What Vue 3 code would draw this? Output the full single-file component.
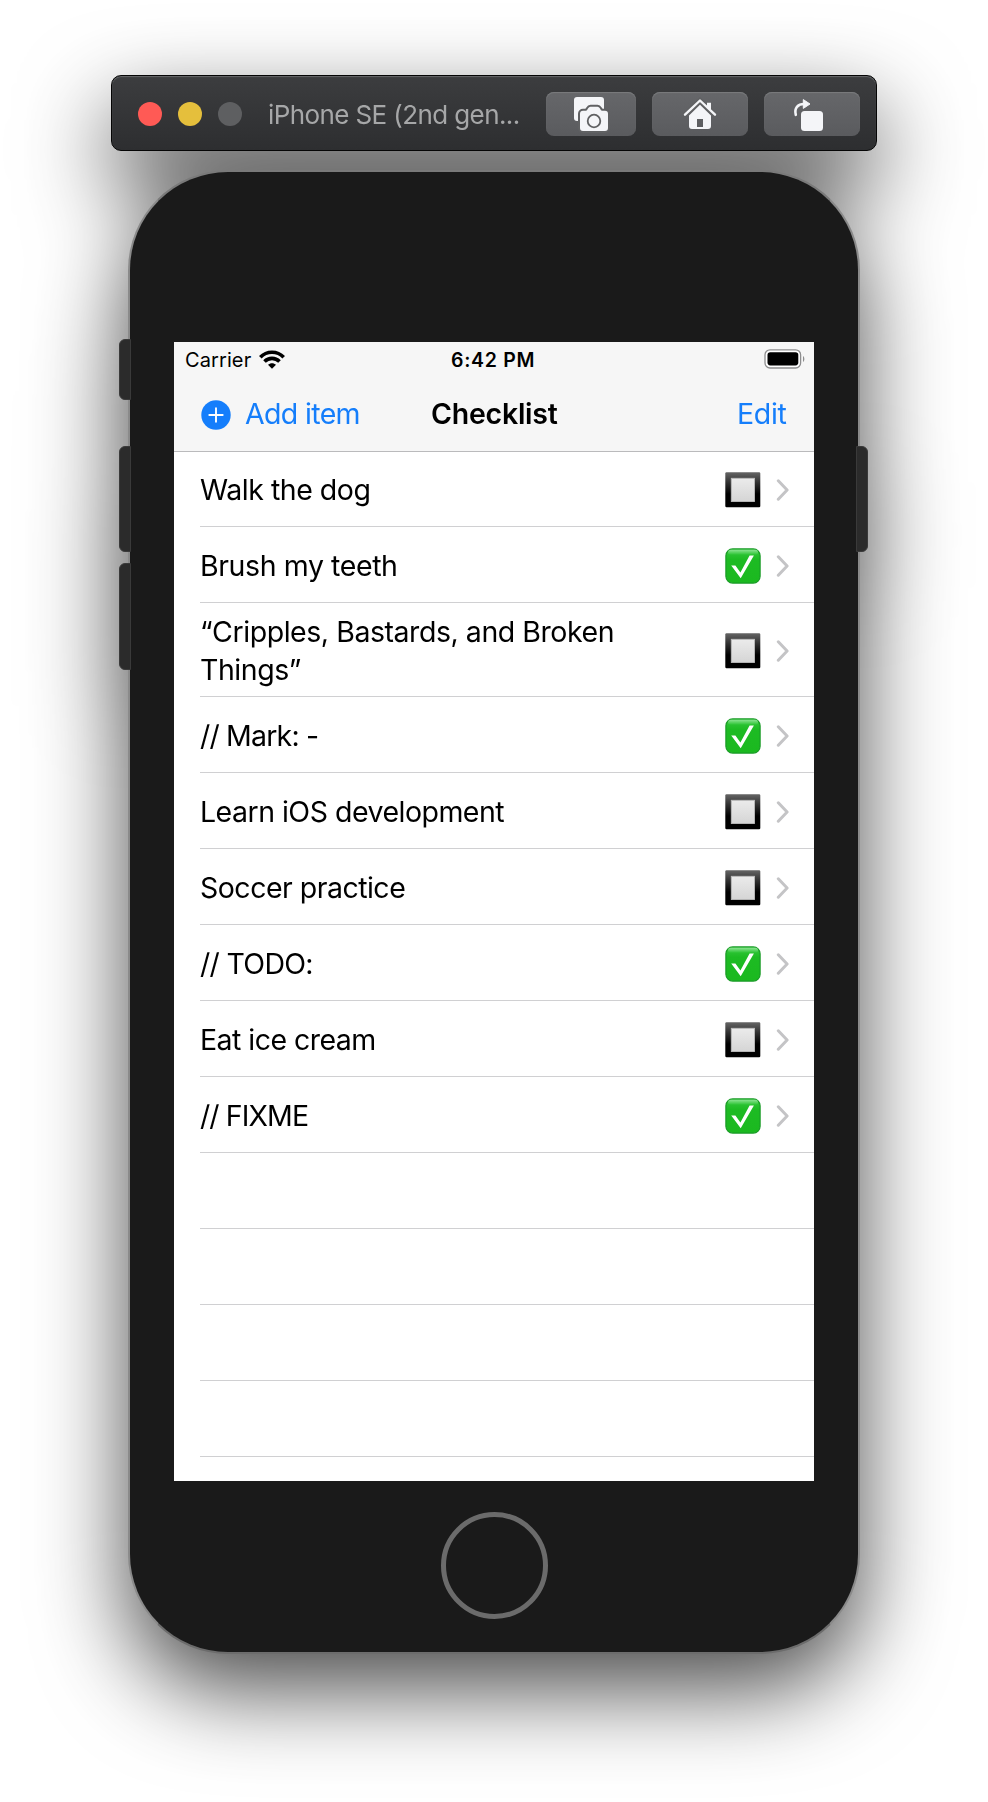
<script setup>
const items = [
  { text: 'Walk the dog', done: false, spacing: -0.46 },
  { text: 'Brush my teeth', done: true, spacing: -0.4 },
  { text: '“Cripples, Bastards, and Broken Things”', done: false, spacing: -0.45, tall: true },
  { text: '// Mark: -', done: true, spacing: -0.82 },
  { text: 'Learn iOS development', done: false, spacing: -0.51 },
  { text: 'Soccer practice', done: false, spacing: -0.51 },
  { text: '// TODO:', done: true, spacing: -0.7 },
  { text: 'Eat ice cream', done: false, spacing: -0.54 },
  { text: '// FIXME', done: true, spacing: -0.9 }
]
</script>

<template>
  <main class="desktop">
    <div class="simulator">
      <header class="toolbar">
        <span class="light red"></span>
        <span class="light yellow"></span>
        <span class="light gray"></span>
        <span class="device-name">iPhone SE (2nd gen...</span>
        <button class="tool shot">
          <svg width="90" height="44" viewBox="0 0 90 44">
            <rect x="28" y="5" width="30" height="24" rx="3" fill="#f4f5f8" />
            <path d="M37 18.700h3c1.500 0 2-4 4.500-4h7c2.500 0 3 4 4.500 4h3a3 3 0 0 1 3 3V36a3 3 0 0 1-3 3H37a3 3 0 0 1-3-3V21.700a3 3 0 0 1 3-3z" stroke="#606163" stroke-width="4" fill="#606163" />
            <path d="M37 18.700h3c1.500 0 2-4 4.500-4h7c2.500 0 3 4 4.500 4h3a3 3 0 0 1 3 3V36a3 3 0 0 1-3 3H37a3 3 0 0 1-3-3V21.700a3 3 0 0 1 3-3z" fill="#f4f5f8" />
            <circle cx="48" cy="29" r="6.300" fill="none" stroke="#606163" stroke-width="1.800" />
          </svg>
        </button>
        <button class="tool">
          <svg width="96" height="44" viewBox="0 0 96 44" fill="#f4f5f8">
            <path d="M48 12.700 59 23.500V34a3 3 0 0 1-3 3H51V27h-6v10h-5a3 3 0 0 1-3-3V23.500z" />
            <path d="M45 35h6v2h-6z" />
            <path d="M33 22.700 48 8.500l15 14.200" fill="none" stroke="#606163" stroke-width="5" />
            <path d="M33 22.700 48 8.500l15 14.200" fill="none" stroke="#f4f5f8" stroke-width="2.400" stroke-linecap="round" stroke-linejoin="round" />
            <path d="M55 10.700h4v8l-4-4z" />
          </svg>
        </button>
        <button class="tool">
          <svg width="96" height="44" viewBox="0 0 96 44" fill="#f4f5f8">
            <rect x="37" y="19" width="22" height="20" rx="3.500" />
            <path d="M31.800 22.800C30 16 34 12 40 12" fill="none" stroke="#f4f5f8" stroke-width="2.600" stroke-linecap="round" />
            <path d="M39.300 7.600v8.800l6.700-4.400z" stroke="#f4f5f8" stroke-linejoin="round" />
          </svg>
        </button>
      </header>

      <section class="phone">
        <i class="side mute"></i>
        <i class="side up"></i>
        <i class="side down"></i>
        <i class="side power"></i>
        <div class="body">
          <div class="screen">
            <div class="status">
              <span class="carrier">Carrier</span>
              <svg class="wifi" width="26" height="19" viewBox="0 0 26 19">
                <g fill="none" stroke="#000" stroke-width="3.600">
                  <path d="M1.300 7.300C7.600 .6 18.400 .6 24.700 7.300" />
                  <path d="M5.500 11.500c4.200-4.200 10.800-4.200 15 0" />
                </g>
                <path d="M9 14.800c2.200-2.100 5.800-2.100 8 0L13 18.800z" />
              </svg>
              <span class="clock">6:42 PM</span>
              <svg class="battery" width="42" height="20" viewBox="0 0 42 20">
                <rect x="1" y=".8" width="35.600" height="18.200" rx="5" fill="#fff" stroke="#8d8d8e" stroke-width="1.300" />
                <rect x="3.500" y="3.200" width="30.800" height="13.200" rx="2.800" />
                <path d="M39 7v6c1.800-1 1.800-5 0-6z" fill="#8d8d8e" />
              </svg>
            </div>
            <nav class="navbar">
              <svg class="plus" width="30" height="30" viewBox="0 0 30 30">
                <circle cx="15" cy="15" r="14.700" fill="#157efb" />
                <path d="M15 8.300v13.400M8.300 15h13.400" stroke="#fff" stroke-width="1.900" stroke-linecap="round" />
              </svg>
              <span class="add">Add item</span>
              <h1>Checklist</h1>
              <span class="edit">Edit</span>
            </nav>
            <ul class="list">
              <li v-for="item in items" :key="item.text" :class="{ tall: item.tall }">
                <span class="label" :style="{ letterSpacing: item.spacing + 'px' }">{{ item.text }}</span>
                <svg v-if="item.done" class="mark" width="36" height="36" viewBox="0 0 36 36">
                  <defs>
                    <linearGradient id="green" x2="0" y2="1">
                      <stop stop-color="#38c940" /><stop offset=".3" stop-color="#1dbb23" /><stop offset="1" stop-color="#1bb91f" />
                    </linearGradient>
                    <linearGradient id="gloss" x2="0" y2="1">
                      <stop stop-color="#8be391" /><stop offset="1" stop-color="#2bc433" />
                    </linearGradient>
                  </defs>
                  <rect x=".9" y=".9" width="34.200" height="34.200" rx="6.800" fill="url(#green)" stroke="#199b26" stroke-width="1.200" />
                  <rect x="3" y="1.800" width="30" height="5" rx="2.500" fill="url(#gloss)" />
                  <path d="M6.200 17.500h4.200l5 7.100L24.600 7.500h4.300L15.700 30.200z" fill="#fff" />
                </svg>
                <svg v-else class="mark" width="36" height="36" viewBox="0 0 36 36">
                  <defs>
                    <linearGradient id="frame" x2="0" y2="1">
                      <stop stop-color="#656565" /><stop offset=".3" stop-color="#303030" /><stop offset=".62" stop-color="#000" />
                    </linearGradient>
                    <linearGradient id="pane" x2="0" y2="1">
                      <stop stop-color="#ebebeb" /><stop offset="1" stop-color="#d5d5d5" />
                    </linearGradient>
                  </defs>
                  <rect x=".3" y=".3" width="35" height="35" rx="1.200" fill="url(#frame)" />
                  <rect x="6.300" y="6.300" width="23.200" height="23.200" fill="url(#pane)" stroke="#bcbcbc" stroke-width=".9" />
                </svg>
                <svg class="chevron" width="14" height="22" viewBox="0 0 14 22">
                  <path d="m2.300 1.800 8.800 9.200-8.800 9.200" fill="none" stroke="#c4c4c6" stroke-width="3" stroke-linecap="round" stroke-linejoin="round" />
                </svg>
              </li>
              <li v-for="n in 4" :key="n"></li>
            </ul>
          </div>
          <div class="home"></div>
        </div>
      </section>
    </div>
  </main>
</template>

<style>
body { margin: 0; background: #fff; }
</style>

<style scoped>
.desktop {
  box-sizing: border-box;
  width: 988px;
  height: 1802px;
  padding-top: 75px;
  overflow: hidden;
  background: #fff;
  font-family: Inter, "Liberation Sans", sans-serif;
}
.simulator {
  display: flex;
  flex-direction: column;
  align-items: center;
  gap: 19px;
  filter: drop-shadow(0 36px 45px rgba(0, 0, 0, .7));
}
.toolbar {
  box-sizing: border-box;
  display: flex;
  align-items: center;
  width: 766px;
  height: 76px;
  padding: 1px 16px 0 26px;
  border: 1px solid #050505;
  border-radius: 10px;
  background: linear-gradient(#3c3d3f, #2d2e30);
  box-shadow: inset 0 1px 1px #66686a;
}
.light { flex: none; width: 24px; height: 24px; margin-right: 16px; border-radius: 50%; }
.red { background: #ff5a55; }
.yellow { background: #e5bf3c; }
.gray { background: #5e5f61; }
.device-name { flex: 1; margin: 2px 0 0 10px; color: #a6a7a8; font-size: 26px; letter-spacing: -.6px; white-space: nowrap; }
.tool {
  flex: none;
  width: 96px;
  height: 44px;
  margin: 0 0 0 16px;
  padding: 0;
  border: 0;
  border-radius: 8px;
  background: linear-gradient(#66676a, #5a5b5e);
  box-shadow: inset 0 1px 1px #7b7c7e;
}
.tool.shot { width: 90px; }
.tool svg { display: block; }
.phone { position: relative; width: 732px; height: 1484px; }
.body {
  box-sizing: border-box;
  display: flex;
  flex-direction: column;
  align-items: center;
  height: 1484px;
  padding-top: 170px;
  border: 2px solid #7a7a7a;
  border-color: #7a7a7a #8a8a8a #6c6c6c;
  border-radius: 100px;
  background: #1a1a1a;
}
.side { position: absolute; z-index: 1; box-sizing: border-box; left: -9px; width: 12px; border: 1px solid #3a3a3a; border-radius: 6px 0 0 6px; background: #2b2b2b; }
.mute { top: 169px; height: 61px; }
.up { top: 276px; height: 106px; }
.down { top: 393px; height: 107px; }
.power { top: 276px; left: 728px; height: 106px; border-radius: 0 6px 6px 0; }
.screen { flex: none; width: 640px; height: 1139px; overflow: hidden; background: #fff; color: #000; }
.status { display: grid; grid-template-columns: 61px 26px 1fr 42px; gap: 0 12px; align-items: center; height: 36px; padding: 0 8px 0 12px; background: #f6f6f6; }
.carrier { margin-left: -1px; font-size: 20px; letter-spacing: .1px; }
.wifi { margin-top: -1px; }
.clock { margin-left: 154px; font-size: 19.500px; font-weight: 600; letter-spacing: .7px; }
.battery { margin-top: -2px; }
.navbar { display: grid; grid-template-columns: 30px 186px 1fr 50px; align-items: center; height: 73px; padding: 0 27px; border-bottom: 1px solid #bababc; background: #f6f6f6; font-size: 28.500px; white-space: nowrap; }
.plus { display: block; }
.add, .edit { margin-top: -2px; color: #157efb; }
.add { margin-left: 14px; letter-spacing: -.65px; }
h1 { margin: -2px 0 0 14px; font-size: 28.500px; font-weight: 600; letter-spacing: -.25px; }
.edit { letter-spacing: -.3px; }
.list { margin: 0 0 0 26px; padding: 0; list-style: none; }
.list li { box-sizing: border-box; display: flex; align-items: center; height: 76px; padding: 2px 24px 0 0; border-bottom: 1px solid #d0d0d2; }
.list li:first-child { height: 75px; }
.list li.tall { height: 94px; }
.label { flex: 1; font-size: 28.500px; line-height: 37.500px; }
.tall .label { padding-right: 65px; }
.mark { flex: none; }
.chevron { flex: none; margin-left: 15px; }
.home { box-sizing: border-box; flex: none; width: 107px; height: 107px; margin-top: 31px; border: 5px solid #6b6b6b; border-radius: 50%; }
</style>
